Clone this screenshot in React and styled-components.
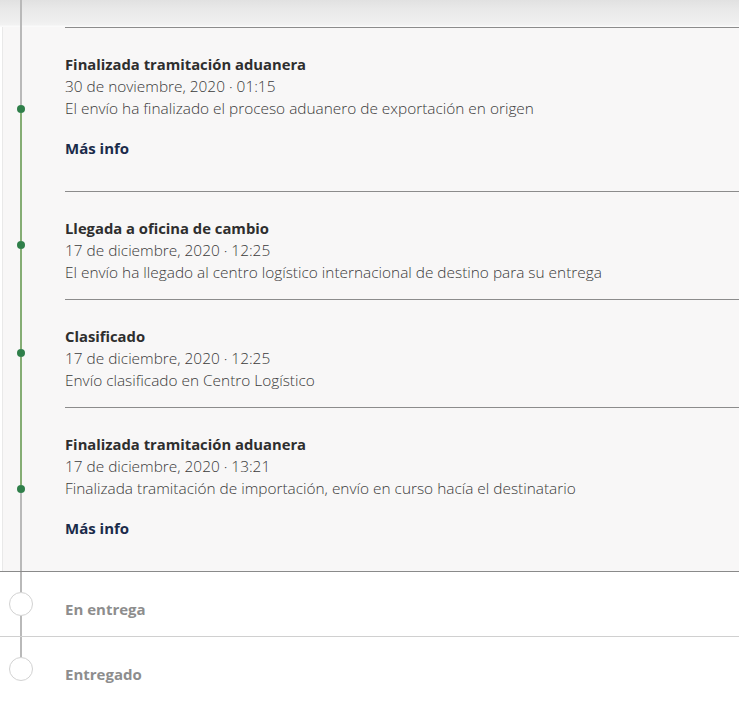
import styled, { createGlobalStyle } from 'styled-components';

const GlobalStyle = createGlobalStyle`
    html, body {
        margin: 0;
        padding: 0;
        background: #ffffff;
    }
    body {
        font-family: "Open Sans", "Liberation Sans", sans-serif;
        color: #333;
    }
`

const Page = styled.div`
    width: 739px;
    display: flex;
    flex-direction: column;
`

const Panel = styled.div`
    background: #f8f7f7;
    box-shadow: inset 2px 0 0 #ffffff, inset 3px 0 0 #e9e9e9;
    border-bottom: 1px solid #8a8a8a;
    display: flex;
    flex-direction: column;
`

const Row = styled.div`
    display: flex;
    align-items: stretch;
`

const TopRow = styled(Row)`
    height: 27px;
    background: linear-gradient(#e1e1e1 0px, #e8e8e8 8px, #eeeeee 20px, #f2f2f2 25px, #fafafa 26px);
`

const Rail = styled.div`
    width: 42px;
    flex-shrink: 0;
    display: flex;
    flex-direction: column;
    align-items: center;
`

const Segment = styled.div`
    width: 2px;
    flex: ${p => (p.$fixed ? `0 0 ${p.$fixed}px` : '1')};
    background: ${p => (p.$done ? '#85ad74' : '#b9b9b9')};
`

const Dot = styled.div`
    width: 8px;
    height: 8px;
    border-radius: 50%;
    background: #2f7f4a;
    flex-shrink: 0;
`

const Ring = styled.div`
    width: 22px;
    height: 22px;
    border-radius: 50%;
    border: 1px solid #d2d2d2;
    background: #ffffff;
    flex-shrink: 0;
`

const EventBody = styled.div`
    flex: 1;
    margin-left: 23px;
    border-top: 1px solid #8c8c8c;
    padding: 25px 0 15px;
    display: flex;
    flex-direction: column;
`

const Title = styled.div`
    font-size: 14.8px;
    font-weight: 700;
    line-height: 23px;
    color: #2e2e2e;
`

const Line = styled.div`
    font-size: 15.4px;
    font-weight: 300;
    line-height: 22px;
    color: #3a3a3a;
    white-space: nowrap;
`

const MoreLink = styled.a`
    font-size: 15px;
    font-weight: 700;
    line-height: 22px;
    color: #1b2b4b;
    text-decoration: none;
    margin: 17px 0;
    cursor: pointer;
`

const StepRow = styled(Row)`
    height: 64px;
    border-bottom: ${p => (p.$last ? 'none' : '1px solid #d0d0d0')};
`

const StepLabel = styled.div`
    margin-left: 23px;
    padding-top: 27px;
    font-size: 15px;
    font-weight: 700;
    color: #8d8d8d;
`

const events = [
    {
        title: 'Finalizada tramitación aduanera',
        date: '30 de noviembre, 2020 · 01:15',
        text: 'El envío ha finalizado el proceso aduanero de exportación en origen',
        more: true,
    },
    {
        title: 'Llegada a oficina de cambio',
        date: '17 de diciembre, 2020 · 12:25',
        text: 'El envío ha llegado al centro logístico internacional de destino para su entrega',
    },
    {
        title: 'Clasificado',
        date: '17 de diciembre, 2020 · 12:25',
        text: 'Envío clasificado en Centro Logístico',
    },
    {
        title: 'Finalizada tramitación aduanera',
        date: '17 de diciembre, 2020 · 13:21',
        text: 'Finalizada tramitación de importación, envío en curso hacía el destinatario',
        more: true,
    },
]

const steps = ['En entrega', 'Entregado']

function App() {
    return (
        <Page>
            <GlobalStyle />
            <Panel>
                <TopRow>
                    <Rail>
                        <Segment />
                    </Rail>
                </TopRow>
                {events.map((ev, i) => (
                    <Row key={i}>
                        <Rail>
                            <Segment $done={i > 0} />
                            <Dot />
                            <Segment $done={i < events.length - 1} />
                        </Rail>
                        <EventBody>
                            <Title>{ev.title}</Title>
                            <Line>{ev.date}</Line>
                            <Line>{ev.text}</Line>
                            {ev.more && <MoreLink>Más info</MoreLink>}
                        </EventBody>
                    </Row>
                ))}
            </Panel>
            {steps.map((s, i) => (
                <StepRow key={s} $last={i === steps.length - 1}>
                    <Rail>
                        <Segment $fixed={20} />
                        <Ring />
                        {i < steps.length - 1 && <Segment />}
                    </Rail>
                    <StepLabel>{s}</StepLabel>
                </StepRow>
            ))}
        </Page>
    )
}

export default App;
